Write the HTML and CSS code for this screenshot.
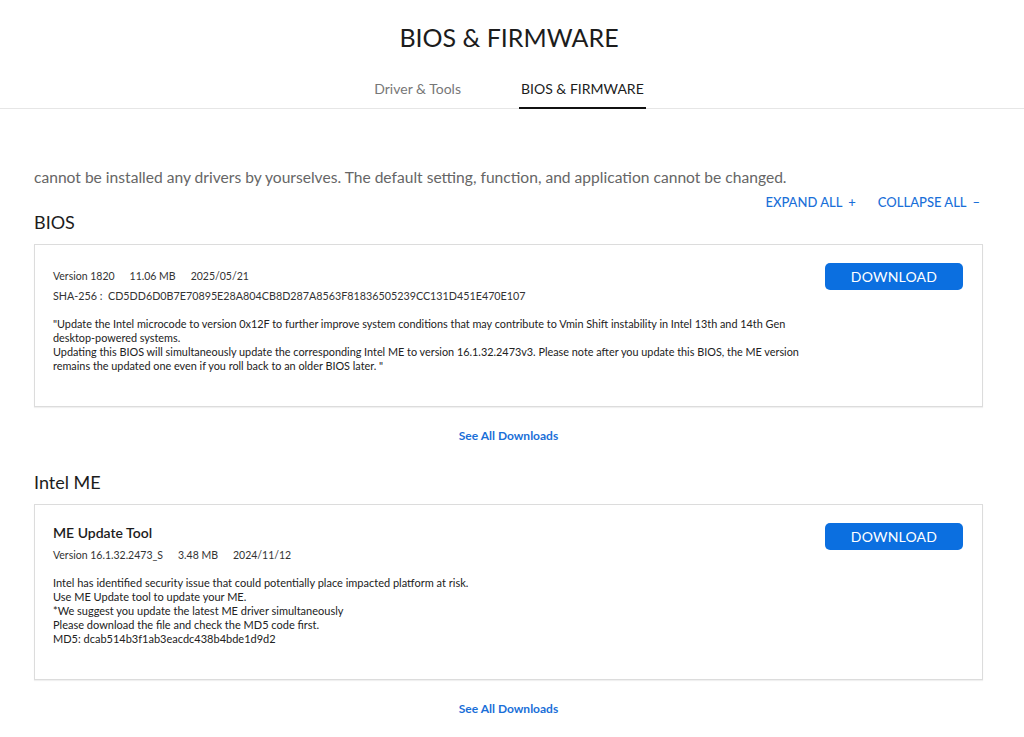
FILE: index.html
```html
<!DOCTYPE html>
<html>
<head>
<meta charset="utf-8">
<link rel="stylesheet" href="styles.css">
</head>
<body>
<header class="page-head">
  <h1 class="page-title">BIOS &amp; FIRMWARE</h1>
  <nav class="tabs">
    <a class="tab">Driver &amp; Tools</a>
    <a class="tab active">BIOS &amp; FIRMWARE</a>
  </nav>
</header>
<main class="content">
  <p class="notice">cannot be installed any drivers by yourselves. The default setting, function, and application cannot be changed.</p>
  <div class="toggles">
    <a class="toggle">EXPAND ALL <span class="sym">+</span></a>
    <a class="toggle">COLLAPSE ALL <span class="sym">&ndash;</span></a>
  </div>

  <section class="group">
    <h2 class="group-title">BIOS</h2>
    <div class="card">
      <div class="card-body">
        <div class="meta"><span>Version 1820</span><span>11.06 MB</span><span>2025/05/21</span></div>
        <div class="meta sha">SHA-256 :&nbsp; CD5DD6D0B7E70895E28A804CB8D287A8563F81836505239CC131D451E470E107</div>
        <div class="desc desc-bios">
          <p>"Update the Intel microcode to version 0x12F to further improve system conditions that may contribute to Vmin Shift instability in Intel 13th and 14th Gen desktop-powered systems.</p>
          <p>Updating this BIOS will simultaneously update the corresponding Intel ME to version 16.1.32.2473v3. Please note after you update this BIOS, the ME version remains the updated one even if you roll back to an older BIOS later. "</p>
        </div>
      </div>
      <a class="btn">DOWNLOAD</a>
    </div>
    <a class="see-all">See All Downloads</a>
  </section>

  <section class="group">
    <h2 class="group-title">Intel ME</h2>
    <div class="card card-me">
      <div class="card-body">
        <h3 class="item-title">ME Update Tool</h3>
        <div class="meta"><span>Version 16.1.32.2473_S</span><span>3.48 MB</span><span>2024/11/12</span></div>
        <div class="desc desc-me">
          <p>Intel has identified security issue that could potentially place impacted platform at risk.</p>
          <p>Use ME Update tool to update your ME.</p>
          <p>*We suggest you update the latest ME driver simultaneously</p>
          <p>Please download the file and check the MD5 code first.</p>
          <p>MD5: dcab514b3f1ab3eacdc438b4bde1d9d2</p>
        </div>
      </div>
      <a class="btn">DOWNLOAD</a>
    </div>
    <a class="see-all">See All Downloads</a>
  </section>
</main>
</body>
</html>
```
FILE: styles.css
```css
* { box-sizing: border-box; }
html, body { margin: 0; padding: 0; background: #fff; }
body {
  font-family: Lato, "Open Sans", sans-serif;
  color: #222;
}
.page-head {
  border-bottom: 1px solid #e6e6e6;
}
.page-title {
  margin: 0;
  padding-top: 20px;
  padding-right: 6px;
  text-align: center;
  font-weight: 400;
  font-size: 25px;
  line-height: 34px;
  letter-spacing: 0;
  color: #1c1c1c;
}
.tabs {
  display: flex;
  justify-content: center;
  gap: 56px;
  margin-top: 24px;
  padding-right: 6px;
}
.tab {
  display: block;
  font-size: 14px;
  line-height: 20px;
  padding: 1px 2px 8px;
  color: #777;
  border-bottom: 2px solid transparent;
  margin-bottom: -1px;
}
.tab.active {
  color: #1c1c1c;
  border-bottom-color: #111;
}
.content {
  margin: 0 41px 0 34px;
  padding-top: 56px;
}
.notice {
  margin: 0;
  font-size: 15.6px;
  line-height: 24px;
  color: #666;
}
.toggles {
  display: flex;
  justify-content: flex-end;
  gap: 22px;
  margin-top: 3px;
  padding-right: 3px;
}
.toggle {
  font-size: 13px;
  line-height: 20px;
  color: #1a6fd8;
  font-weight: 500;
}
.toggle .sym { margin-left: 3px; }
.group-title {
  margin: -1px 0 0;
  font-size: 18px;
  font-weight: 400;
  line-height: 22px;
  color: #1c1c1c;
}
.group + .group .group-title { margin-top: 26px; }
.card {
  margin-top: 11px;
  border: 1px solid #dcdcdc;
  box-shadow: 0 1px 1px rgba(0,0,0,0.06);
  display: flex;
  justify-content: space-between;
  align-items: flex-start;
  padding: 18px 19px 0 18px;
  min-height: 163px;
}
.card-me { min-height: 176px; }
.btn {
  flex: none;
  display: block;
  width: 138px;
  height: 27px;
  line-height: 27px;
  text-align: center;
  background: #0b6fe0;
  color: #fff;
  border-radius: 5px;
  font-size: 14px;
  letter-spacing: 0.2px;
}
.card-body {
  padding-top: 3px;
}
.meta {
  font-size: 10.5px;
  line-height: 20px;
  color: #333;
  display: flex;
  gap: 15px;
}
.meta.sha { font-size: 10.75px; }
.desc {
  margin-top: 11px;
  font-size: 11px;
  line-height: 14px;
  color: #222;
  max-width: 760px;
}
.desc-bios { font-size: 10.85px; }
.desc p { margin: 0; }
.desc-me { margin-top: 11px; }
.item-title {
  margin: 0 0 2px;
  font-size: 14px;
  font-weight: 600;
  line-height: 20px;
  color: #1c1c1c;
}
.card-me .card-body { padding-top: 0; }
.see-all {
  display: block;
  text-align: center;
  margin-top: 20px;
  font-size: 12px;
  font-weight: 700;
  line-height: 18px;
  color: #1a6fd8;
}
```
